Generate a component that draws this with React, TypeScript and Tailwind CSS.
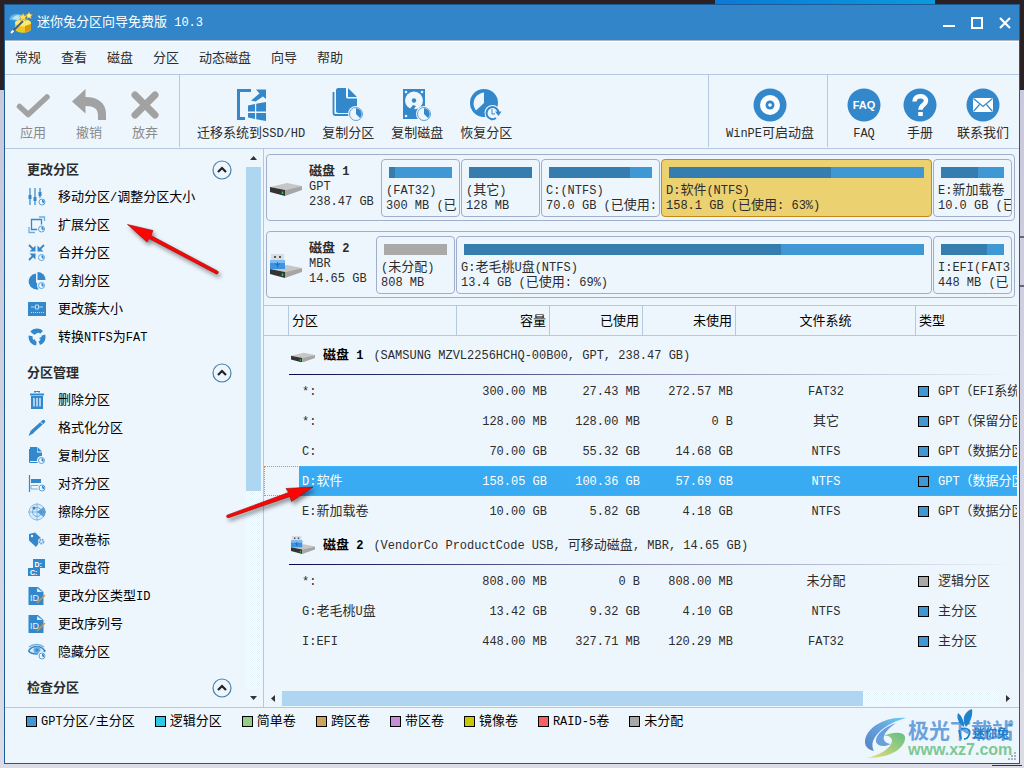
import React from "react";

type IconProps = { className?: string };

const BLUE = "#3387cb";
const PALE = "#eef6fd";

/** Latin runs use the parent's size, Chinese runs are one step larger. */
function Txt({ children }: { children: string }) {
  return (
    <>
      {children.split(/([^\x00-\xff]+)/).map((run, i) =>
        i % 2 ? (
          <span key={i} className="text-[13px]">
            {run}
          </span>
        ) : (
          run
        ),
      )}
    </>
  );
}

function PieBadge({ cx, cy, r }: { cx: number; cy: number; r: number }) {
  return (
    <g>
      <circle cx={cx} cy={cy} r={r + 1} fill={PALE} />
      <circle cx={cx} cy={cy} r={r - 0.5} fill={PALE} stroke="#5da3da" strokeWidth="1" />
      <path
        d={`M${cx} ${cy}V${cy - r + 1.3}A${r - 1.3} ${r - 1.3} 0 0 1 ${cx + (r - 1.3) * 0.7} ${cy + (r - 1.3) * 0.7}Z`}
        fill={BLUE}
      />
    </g>
  );
}

/* ---------- title bar ---------- */

function AppLogo() {
  return (
    <svg viewBox="0 0 24 24" className="size-6">
      <ellipse cx="8" cy="8" rx="7.500" ry="5" fill="#5fb6ea" />
      <path d="M1 9v5c2 4 7 5 10 4V10z" fill="#2c8fd0" />
      <path d="M3 8c2-4 8-5 11-3l-5 4z" fill="#b9e4fa" />
      <path d="M6 12c0-5 16-5 16 0v6c-1 5-15 5-16 0z" fill="#f0c71c" />
      <ellipse cx="14" cy="12" rx="8" ry="3.500" fill="#ffe873" />
      <path d="M16 15l6-2v5c-1 2-4 3-6 3z" fill="#d79a0c" />
      <path d="M2 22L14 10" stroke="#47607a" strokeWidth="2" />
      <path d="M2 22l2.500-2.500" stroke="#fff" strokeWidth="2" />
      <path
        d="M14 2l1.300 2.600 3 .200-2.200 2 .700 3L14 8.300l-2.600 1.500.600-3-2.100-2 3-.200z"
        fill="#ffe45a"
        stroke="#b98912"
        strokeWidth=".5"
      />
      <path
        d="M20 1l1.200 2.200 2.500.300-1.800 1.700.400 2.500-2.300-1.200-2.200 1.200.400-2.500-1.700-1.700 2.400-.300z"
        fill="#fff08a"
        stroke="#b98912"
        strokeWidth=".4"
      />
    </svg>
  );
}

/* ---------- toolbar icons ---------- */

const tool = "h-9 w-9";

function ApplyIcon() {
  return (
    <svg viewBox="0 0 36 36" className={tool}>
      <path d="M4.500 19.500l8.700 8L32 10" fill="none" stroke="#a2a2a2" strokeWidth="5.500" strokeLinecap="round" strokeLinejoin="round" />
    </svg>
  );
}
function UndoIcon() {
  return (
    <svg viewBox="0 0 36 36" className={tool}>
      <path d="M1 14.500L14.500 2v8C27 10 35 16 35 27v6h-8v-5c0-6-4-9-12.500-9v7.500z" fill="#a2a2a2" />
    </svg>
  );
}
function DiscardIcon() {
  return (
    <svg viewBox="0 0 36 36" className={tool}>
      <path d="M8 8l20 20M28 8L8 28" stroke="#a2a2a2" strokeWidth="7" strokeLinecap="round" />
    </svg>
  );
}
function MigrateIcon() {
  return (
    <svg viewBox="0 0 36 36" className={tool}>
      <path d="M18 3.500H5.500v28H12" fill="none" stroke={BLUE} strokeWidth="3" />
      <path d="M23 2.500h10V12l-3-2.500-7.500 5-4.500-1 8.500-7z" fill={BLUE} />
      <path d="M15 18.500l7-1.500v7.500h-7zM23.200 16.700L33 15v9.500h-9.800zM15 26h7v6l-7-1.400zM23.200 26H33v8l-9.800-1.700z" fill={BLUE} />
    </svg>
  );
}
function CopyPartitionIcon() {
  return (
    <svg viewBox="0 0 36 36" className={tool}>
      <path d="M3.500 5v21c0 1.500.500 2 2 2h16" fill="none" stroke={BLUE} strokeWidth="1.800" />
      <path d="M6 3c0-1 1-2 2-2h8v8.500c0 1.500.500 2 2 2h9V24c0 1-1 2-2 2H8c-1 0-2-1-2-2z" fill={BLUE} />
      <path d="M18 1l9 9h-9z" fill={BLUE} />
      <PieBadge cx={26} cy={27} r={7} />
    </svg>
  );
}
function CopyDiskIcon() {
  return (
    <svg viewBox="0 0 36 36" className={tool}>
      <rect x="4" y="2" width="22" height="30" fill={BLUE} />
      <circle cx="15" cy="13.500" r="9" fill={PALE} />
      <circle cx="15" cy="13.500" r="2.200" fill={BLUE} />
      <path d="M10 23l4-5 3 1-2 3 2 1-3 2z" fill={BLUE} />
      <g fill={PALE}>
        <circle cx="7" cy="5" r="1.300" />
        <circle cx="23" cy="5" r="1.300" />
        <circle cx="7" cy="29" r="1.300" />
      </g>
      <PieBadge cx={25} cy={27} r={7} />
    </svg>
  );
}
function RecoverIcon() {
  return (
    <svg viewBox="0 0 36 36" className={tool}>
      <circle cx="16" cy="16" r="14" fill={BLUE} />
      <path d="M16 5.500V16l-8 7.500C2.500 16 7 6.500 16 5.500z" fill={PALE} />
      <circle cx="24.500" cy="26" r="8" fill={PALE} />
      <path d="M28 31A6 6 0 1 1 30.500 26" fill="none" stroke={BLUE} strokeWidth="2" />
      <path d="M27 24.500h6.500l-3 4.500z" fill={BLUE} />
      <path d="M24 22v5h3" fill="none" stroke={BLUE} strokeWidth="1" />
    </svg>
  );
}
function DiscIcon() {
  return (
    <svg viewBox="0 0 36 36" className={tool}>
      <circle cx="18" cy="18" r="16.500" fill={BLUE} />
      <circle cx="18" cy="18" r="10" fill="#fff" />
      <circle cx="18" cy="18" r="4.500" fill={BLUE} />
      <circle cx="18" cy="18" r="1.800" fill="#fff" />
    </svg>
  );
}
function FaqIcon() {
  return (
    <svg viewBox="0 0 36 36" className={tool}>
      <circle cx="18" cy="18" r="16.500" fill={BLUE} />
      <text x="18" y="22" textAnchor="middle" fill="#fff" className="font-['Liberation_Sans',sans-serif] text-[11px] font-bold">
        FAQ
      </text>
    </svg>
  );
}
function HelpIcon() {
  return (
    <svg viewBox="0 0 36 36" className={tool}>
      <circle cx="18" cy="18" r="16.500" fill={BLUE} />
      <path d="M12.500 14.500c0-7 11.500-7 11.500-.8 0 4-5.500 4-5.500 9" fill="none" stroke="#fff" strokeWidth="4.500" />
      <rect x="16.200" y="25" width="4.600" height="4" fill="#fff" />
    </svg>
  );
}
function MailIcon() {
  return (
    <svg viewBox="0 0 36 36" className={tool}>
      <circle cx="18" cy="18" r="16.500" fill={BLUE} />
      <rect x="8" y="11" width="20" height="14" fill="#fff" />
      <path d="M8.500 11.500l9.500 8 9.500-8M8.500 24.500l6-7M27.500 24.500l-6-7" fill="none" stroke={BLUE} strokeWidth="1.200" />
    </svg>
  );
}

/* ---------- sidebar icons ---------- */

const side = "size-[18px] shrink-0";

function Icon18({ children }: { children: React.ReactNode }) {
  return (
    <svg viewBox="0 0 18 18" className={side}>
      {children}
    </svg>
  );
}
const MoveIcon = () => (
  <Icon18>
    <path d="M2 0v17M7 0v17M12 0v10" stroke={BLUE} strokeWidth="1.200" />
    <path d="M.5 7h3v4h-3zM5.500 9h3v4h-3zM10.500 4h3v4h-3z" fill={BLUE} />
    <PieBadge cx={14} cy={14} r={3.5} />
  </Icon18>
);
const ExtendIcon = () => (
  <Icon18>
    <path d="M3.500 3.500h10v10h-10z" fill="none" stroke={BLUE} strokeWidth="1.300" />
    <path d="M11 1h5.500v4M1 11v5.500h6" fill="none" stroke="#6faedf" strokeWidth="1.300" />
    <PieBadge cx={13.5} cy={13} r={3.5} />
  </Icon18>
);
const MergeIcon = () => (
  <Icon18>
    <path d="M1 1l5 5M16 1l-5 5M1 16l5-5" stroke={BLUE} strokeWidth="1.800" />
    <path d="M1.500 7.500h6v-6zM9.500 1.500v6h6zM1.500 9.500h6v6z" fill={BLUE} />
    <PieBadge cx={13.5} cy={13.5} r={3.5} />
  </Icon18>
);
const SplitIcon = () => (
  <Icon18>
    <path d="M8 1.500V10l4.500 6.500A8 8 0 1 1 8 1.500z" fill={BLUE} />
    <path d="M9.500 0A8 8 0 0 1 17.500 8h-8z" fill={BLUE} />
    <PieBadge cx={13.5} cy={13.5} r={3.5} />
  </Icon18>
);
const ClusterIcon = () => (
  <Icon18>
    <rect y="2" width="18" height="14" fill={BLUE} />
    <path d="M3 7h4M11 7h4M7.500 5h3v4h-3z" fill="none" stroke="#b7dbf5" />
    <path d="M3 12.500h13" stroke="#b7dbf5" strokeDasharray="1 1" />
  </Icon18>
);
const ConvertIcon = () => (
  <Icon18>
    <circle cx="9" cy="9" r="6.500" fill="none" stroke={BLUE} strokeWidth="4" strokeDasharray="10.600 3" strokeDashoffset="3" />
    <path d="M6 1l5 3-5 3zM17 8l-2 6-4-4zM8 17l-6-3 5-3z" fill={BLUE} />
  </Icon18>
);
const TrashIcon = () => (
  <Icon18>
    <path d="M7 1.500V0h4v1.500M2 3.500h14" fill="none" stroke={BLUE} strokeWidth="2" />
    <path d="M3 5h12v13H3z" fill={BLUE} />
    <path d="M6 7v8.500M9 7v8.500M12 7v8.500" stroke={PALE} strokeWidth="1.300" />
  </Icon18>
);
const FormatIcon = () => (
  <Icon18>
    <path d="M5 12L15.500 2.500" stroke={BLUE} strokeWidth="3.500" strokeLinecap="round" />
    <path d="M.5 17L3 11l3 3z" fill={BLUE} />
    <path d="M12.500 3l2.500 2.500" stroke={PALE} />
  </Icon18>
);
const CopyIcon = () => (
  <Icon18>
    <path d="M1.500 2v13.500H11" fill="none" stroke={BLUE} />
    <path d="M2 0h7v5.500h5V14H2zM9.500 0L14 4.500H9.500z" fill={BLUE} />
    <PieBadge cx={13.5} cy={13.5} r={3.5} />
  </Icon18>
);
const AlignIcon = () => (
  <Icon18>
    <path d="M1.500 0v17" stroke={BLUE} strokeWidth="1.200" />
    <path d="M3 4h10v4H3z" fill={BLUE} />
    <path d="M3 10.500h9v3.500H3z" fill="none" stroke="#6faedf" />
    <PieBadge cx={14} cy={13} r={3.5} />
  </Icon18>
);
const WipeIcon = () => (
  <Icon18>
    <circle cx="9" cy="9" r="8" fill="#d8eaf8" stroke="#8fbfe4" />
    <circle cx="9" cy="9" r="4.500" fill="none" stroke="#6faedf" />
    <path d="M9 0v18M0 9h18" stroke="#6faedf" strokeWidth=".8" />
    <path d="M9 9l6.500-5a8 8 0 0 1 0 10z" fill={BLUE} opacity=".7" />
    <circle cx="6" cy="5" r="1.600" fill={BLUE} />
  </Icon18>
);
const LabelIcon = () => (
  <Icon18>
    <path d="M1 3l6-1.500 7 6.500-6 8-7-6.500z" fill={BLUE} />
    <circle cx="4" cy="5" r="1.200" fill={PALE} />
    <circle cx="13.500" cy="10.500" r="3.500" fill={PALE} />
    <circle cx="13.500" cy="10.500" r="2" fill="none" stroke="#5da3da" strokeWidth="1.800" strokeDasharray="1.600 .6" />
  </Icon18>
);
const LetterIcon = () => (
  <Icon18>
    <path d="M5 0h12v9h-5v8H0V9h5z" fill={BLUE} />
    <text x="6.500" y="7.500" fill="#fff" className="font-['Liberation_Sans',sans-serif] text-[7px] font-bold">
      D:
    </text>
    <text x="2" y="15.500" fill="#fff" className="font-['Liberation_Sans',sans-serif] text-[7px] font-bold">
      C:
    </text>
  </Icon18>
);
const IdIcon = () => (
  <Icon18>
    <path d="M.5 0H10l5.500 5v13H.5z" fill={BLUE} />
    <path d="M9 1l5.500 4H9z" fill="#d8eaf8" />
    <text x="2" y="14" fill="#e6f2fb" className="font-['Liberation_Sans',sans-serif] text-[9px]">
      ID
    </text>
    <path d="M9 16l8-8" stroke="#d2963c" strokeWidth="1.500" />
  </Icon18>
);
const HideIcon = () => (
  <Icon18>
    <path d="M.5 8C4 2 13 2 17 8c-4 4-13 4-16.500 0z" fill="#d8eaf8" stroke={BLUE} strokeWidth="1.500" />
    <circle cx="9" cy="7" r="3.500" fill="#6faedf" />
    <circle cx="9" cy="7" r="1.500" fill={BLUE} />
    <path d="M1 4C5 .5 12 .5 16 4" fill="none" stroke="#6faedf" strokeWidth="1.500" />
    <PieBadge cx={14} cy={13} r={3.5} />
  </Icon18>
);

/* ---------- drives ---------- */

function DriveShape() {
  return (
    <>
      <path d="M0 5L17 1l15 3-17 4z" fill="#c6c6c6" />
      <path d="M0 5l15 3v6L0 10z" fill="#333" />
      <path d="M15 8l17-4v4L15 14z" fill="#a6a6a6" />
      <path d="M12.500 9.500v2.500" stroke="#28d23c" strokeWidth="1.500" />
    </>
  );
}
function HddIcon({ className }: IconProps) {
  return (
    <svg viewBox="0 0 32 14" className={className}>
      <DriveShape />
    </svg>
  );
}
function UsbIcon({ className }: IconProps) {
  return (
    <svg viewBox="0 0 32 24" className={className}>
      <g transform="translate(0 10)">
        <DriveShape />
      </g>
      <rect x="1" y="0" width="13" height="7" fill="#d9dde2" />
      <path d="M4 2h2v2H4zM9 2h2v2H9z" fill="#555" />
      <path d="M0 6h15v9H0z" fill="#3b93e4" />
      <path d="M0 6h15v3H0z" fill="#7dbcf2" />
      <path d="M7.500 8v5.500M5 9.500l2.500 2 2.500-2" fill="none" stroke="#1c66b8" strokeWidth=".9" />
    </svg>
  );
}

/* ---------- data ---------- */

const menus = ["常规", "查看", "磁盘", "分区", "动态磁盘", "向导", "帮助"];

const sections = [
  {
    title: "更改分区",
    items: [
      { label: "移动分区/调整分区大小", Icon: MoveIcon },
      { label: "扩展分区", Icon: ExtendIcon },
      { label: "合并分区", Icon: MergeIcon },
      { label: "分割分区", Icon: SplitIcon },
      { label: "更改簇大小", Icon: ClusterIcon },
      { label: "转换NTFS为FAT", Icon: ConvertIcon },
    ],
  },
  {
    title: "分区管理",
    items: [
      { label: "删除分区", Icon: TrashIcon },
      { label: "格式化分区", Icon: FormatIcon },
      { label: "复制分区", Icon: CopyIcon },
      { label: "对齐分区", Icon: AlignIcon },
      { label: "擦除分区", Icon: WipeIcon },
      { label: "更改卷标", Icon: LabelIcon },
      { label: "更改盘符", Icon: LetterIcon },
      { label: "更改分区类型ID", Icon: IdIcon },
      { label: "更改序列号", Icon: IdIcon },
      { label: "隐藏分区", Icon: HideIcon },
    ],
  },
  { title: "检查分区", items: [] },
];

type Block = { name: string; size: string; used: number; grow: string; free?: boolean; selected?: boolean };
const small = "w-[79px] shrink-0";
const disks = [
  {
    name: "磁盘 1",
    scheme: "GPT",
    size: "238.47 GB",
    usb: false,
    info: "w-[114px]",
    blocks: [
      { name: "(FAT32)", size: "300 MB (已", used: 9.5, grow: small },
      { name: "(其它)", size: "128 MB", used: 100, grow: small },
      { name: "C:(NTFS)", size: "70.0 GB (已使用:", used: 79, grow: "w-[119px] shrink-0" },
      { name: "D:软件(NTFS)", size: "158.1 GB (已使用: 63%)", used: 63.5, grow: "min-w-0 flex-1", selected: true },
      { name: "E:新加载卷", size: "10.0 GB (已", used: 58.5, grow: small },
    ] as Block[],
  },
  {
    name: "磁盘 2",
    scheme: "MBR",
    size: "14.65 GB",
    usb: true,
    info: "w-[109px]",
    blocks: [
      { name: "(未分配)", size: "808 MB", used: 0, grow: small, free: true },
      { name: "G:老毛桃U盘(NTFS)", size: "13.4 GB (已使用: 69%)", used: 69, grow: "min-w-0 flex-1" },
      { name: "I:EFI(FAT3", size: "448 MB (已", used: 73, grow: small },
    ] as Block[],
  },
];

const groups = [
  {
    name: "磁盘 1",
    detail: "(SAMSUNG MZVL2256HCHQ-00B00, GPT, 238.47 GB)",
    usb: false,
    rows: [
      ["*:", "300.00 MB", "27.43 MB", "272.57 MB", "FAT32", "GPT（EFI系统"],
      ["*:", "128.00 MB", "128.00 MB", "0 B", "其它", "GPT（保留分区"],
      ["C:", "70.00 GB", "55.32 GB", "14.68 GB", "NTFS", "GPT（数据分区"],
      ["D:软件", "158.05 GB", "100.36 GB", "57.69 GB", "NTFS", "GPT（数据分区"],
      ["E:新加载卷", "10.00 GB", "5.82 GB", "4.18 GB", "NTFS", "GPT（数据分区"],
    ],
  },
  {
    name: "磁盘 2",
    detail: "(VendorCo ProductCode USB, 可移动磁盘, MBR, 14.65 GB)",
    usb: true,
    rows: [
      ["*:", "808.00 MB", "0 B", "808.00 MB", "未分配", "逻辑分区"],
      ["G:老毛桃U盘", "13.42 GB", "9.32 GB", "4.10 GB", "NTFS", "主分区"],
      ["I:EFI", "448.00 MB", "327.71 MB", "120.29 MB", "FAT32", "主分区"],
    ],
  },
];

const legend = [
  ["GPT分区/主分区", "bg-[#3f98d3]"],
  ["逻辑分区", "bg-[#29cbe8]"],
  ["简单卷", "bg-[#97cd8b]"],
  ["跨区卷", "bg-[#cca45a]"],
  ["带区卷", "bg-[#c78ed8]"],
  ["镜像卷", "bg-[#c9c900]"],
  ["RAID-5卷", "bg-[#f96262]"],
  ["未分配", "bg-[#a8a8a8]"],
];

/* ---------- pieces ---------- */

function ToolButton({ label, width = "", muted, children }: { label: string; width?: string; muted?: boolean; children: React.ReactNode }) {
  return (
    <button type="button" className={`flex flex-col items-center whitespace-nowrap pt-3 ${width} ${muted ? "text-[#8a8a8a]" : ""}`}>
      {children}
      <span className="mt-[3px] leading-4">
        <Txt>{label}</Txt>
      </span>
    </button>
  );
}

function Section({ title, items }: { title: string; items: { label: string; Icon: () => React.JSX.Element }[] }) {
  return (
    <section>
      <div className="flex h-[26px] items-center justify-between pl-[22px] pr-[14px]">
        <h2 className="pt-[2px] text-[13px] font-bold">{title}</h2>
        <button type="button" aria-label={title} className="size-5">
          <svg viewBox="0 0 20 20" className="size-5">
            <circle cx="10" cy="10" r="9" fill="none" stroke="#4781ab" strokeWidth="1.200" />
            <path d="M6 12l4-4 4 4" fill="none" stroke="#222" strokeWidth="2.200" />
          </svg>
        </button>
      </div>
      <ul>
        {items.map(({ label, Icon }) => (
          <li key={label}>
            <button type="button" className="flex h-7 w-full items-center gap-3 whitespace-nowrap pl-[23px] text-black">
              <Icon />
              <span className="pt-[2px] leading-4">
                <Txt>{label}</Txt>
              </span>
            </button>
          </li>
        ))}
      </ul>
    </section>
  );
}

function DiskPanel({ disk }: { disk: (typeof disks)[number] }) {
  return (
    <div className="flex rounded-[4px] border border-[#a0aeca] pb-[3px] pr-[2px] pt-1 leading-[15px]">
      <div className={`flex shrink-0 items-center ${disk.info}`}>
        <div className="w-[42px] pl-[3px] pt-[2px]">{disk.usb ? <UsbIcon className="w-8" /> : <HddIcon className="w-8" />}</div>
        <div className="self-start whitespace-nowrap pt-[5px]">
          <div className="font-bold">
            <Txt>{disk.name}</Txt>
          </div>
          <div>{disk.scheme}</div>
          <div>{disk.size}</div>
        </div>
      </div>
      <div className="flex min-w-0 flex-1 gap-px">
        {disk.blocks.map((b) => (
          <button
            type="button"
            key={b.name}
            className={`flex h-[58px] flex-col overflow-hidden rounded-[4px] border pt-[7px] text-left ${b.grow} ${
              b.selected ? "border-[#c68a14] bg-[#ebd170]" : "border-[#a0aeca]"
            }`}
          >
            <span className={`mx-[7px] block h-[11px] self-stretch ${b.free ? "bg-[#a9a9a9]" : "bg-[#3f98d3]"}`}>
              <span className="block h-full bg-[#347dae]" style={{ width: `${b.used}%` }} />
            </span>
            <span className="ml-1 mt-[5px] flex flex-col self-stretch overflow-hidden whitespace-nowrap">
              <span className="h-[15px] leading-4">
                <Txt>{b.name}</Txt>
              </span>
              <span className="h-4 leading-4">
                <Txt>{b.size}</Txt>
              </span>
            </span>
          </button>
        ))}
      </div>
    </div>
  );
}

const hatch = "bg-[repeating-conic-gradient(#e3f2fb_0_25%,#ffffff_0_50%)] bg-[length:2px_2px]";

function Watermark() {
  return (
    <div className="pointer-events-none absolute bottom-1 right-[6px] flex items-center gap-[2px]">
      <svg viewBox="0 0 42 42" className="size-[42px] opacity-90">
        <defs>
          <linearGradient id="swirlTop" x1="0" y1="1" x2="1" y2="0">
            <stop offset="0" stopColor="#4377c0" />
            <stop offset=".6" stopColor="#5b9ddc" />
            <stop offset="1" stopColor="#58d0f4" />
          </linearGradient>
          <linearGradient id="swirlLow" x1="0" y1="1" x2="1" y2="0">
            <stop offset="0" stopColor="#e8dc6a" />
            <stop offset="1" stopColor="#54b878" />
          </linearGradient>
        </defs>
        <path d="M42 1C20-1 1 12 1 25c0 5 4 8 9 9C4 24 16 8 42 1z" fill="url(#swirlTop)" />
        <path d="M32 6C20 10 11 18 12 25c2 5 9 5 15 2-9-1-12-9 5-21z" fill="#5a97da" />
        <path d="M19 19c8-4 21-5 22 1 1 9-11 21-38 21 12-3 24-9 25-17 0-4-4-6-9-5z" fill="url(#swirlLow)" />
      </svg>
      <div className="font-['Noto_Sans_CJK_SC',sans-serif] leading-none">
        <div className="text-[21px] font-bold leading-[23px] text-[#6ba2dc]">极光下载站</div>
        <div className="font-['Liberation_Sans',sans-serif] text-[16px] font-bold leading-[18px] text-[#7cc894]">www.xz7.com</div>
      </div>
      <svg viewBox="0 0 20 32" className="absolute right-9 top-[-8px] h-8 w-5">
        <path d="M9 18C4 10 8 2 15 0c1 6-1 13-6 18zM7 18C2 15-1 9 1 4c4 3 6 8 6 14z" fill="#1f82cc" />
        <path d="M4 20c7-2 10 2 8 6-1 3-3 4-5 4M2 21l2 9" fill="none" stroke="#1f82cc" strokeWidth="1.800" />
      </svg>
      <span className="absolute right-1 top-[9px] whitespace-nowrap text-[12px] font-bold text-[#1f7cc8]">迷你兔</span>
      <span className="absolute right-0 top-[1px] text-[8px] font-bold text-[#1f7cc8]">®</span>
    </div>
  );
}

function Pointers() {
  return (
    <svg className="pointer-events-none absolute left-0 top-0 h-[540px] w-[330px] drop-shadow-[2px_3px_2px_rgba(0,0,0,0.45)]">
      <g fill="#fb0505" stroke="#8c1010" strokeWidth=".6">
        <path d="M127.500 224.500L153 230.500l-2 5 66.500 35.500a1.500 1.500 0 0 1-1.600 2.700L149 238.500l-2 3.500z" />
        <path d="M313 487l-27 1.500 2.500 4-61 22.500a1.400 1.400 0 0 0 1 2.700L290 496.500l1.500 5z" />
      </g>
    </svg>
  );
}

export default function App() {
  return (
    <div className="relative h-screen overflow-hidden p-1 font-['Liberation_Mono','Noto_Sans_CJK_SC',monospace] text-[12px] text-[#2c2c2c] [background:linear-gradient(to_right,#2b2024_715px,#0a7ad8_715px,#0a9ade_935px,#2b2024_935px)_top/100%_4px_no-repeat,linear-gradient(#2020e0,#2020e0)_right_2px_bottom_2px/30px_1px_no-repeat,linear-gradient(#66666e,#66666e)_right_0_top_236px/4px_2px_no-repeat,linear-gradient(#66666e,#66666e)_right_0_top_285px/4px_2px_no-repeat,linear-gradient(#2b2024_90px,#c9c8dc_90px,#dcdce8)]">
      <div className="flex h-full flex-col border border-[#1d5c94] bg-[#eef6fd]">
        <header className="flex h-9 shrink-0 items-center border-b border-[#a9b8c6] bg-[#3385ca] text-white">
          <div className="flex flex-1 items-center gap-1 pl-1">
            <AppLogo />
            <h1 className="leading-4">
              <Txt>迷你兔分区向导免费版 10.3</Txt>
            </h1>
          </div>
          <div className="flex items-center gap-4 pr-2">
            <button type="button" aria-label="最小化">
              <svg viewBox="0 0 12 12" className="size-3">
                <path d="M0 9h12" stroke="#fff" strokeWidth="2" />
              </svg>
            </button>
            <button type="button" aria-label="最大化">
              <svg viewBox="0 0 12 12" className="size-3">
                <path d="M1 1h10v10H1z" fill="none" stroke="#fff" strokeWidth="2" />
              </svg>
            </button>
            <button type="button" aria-label="关闭">
              <svg viewBox="0 0 12 12" className="size-3">
                <path d="M1 1l10 10M11 1L1 11" stroke="#fff" strokeWidth="2.200" />
              </svg>
            </button>
          </div>
        </header>

        <nav className="flex h-[34px] shrink-0 items-center gap-5 border-b border-t border-b-[#b5c8e2] border-t-white pl-[10px] pt-[2px] text-[13px]">
          {menus.map((m) => (
            <button type="button" key={m} className="leading-4">
              {m}
            </button>
          ))}
        </nav>

        <div className="flex h-[74px] shrink-0 border-b border-[#b5c8e2]">
          <div className="mb-px flex w-[175px] shrink-0 items-start border-r border-[#b5c8e2]">
            <ToolButton label="应用" width="w-14" muted>
              <ApplyIcon />
            </ToolButton>
            <ToolButton label="撤销" width="w-14" muted>
              <UndoIcon />
            </ToolButton>
            <ToolButton label="放弃" width="w-14" muted>
              <DiscardIcon />
            </ToolButton>
          </div>
          <div className="flex flex-1 items-start gap-[17px] pl-[17px]">
            <ToolButton label="迁移系统到SSD/HD">
              <MigrateIcon />
            </ToolButton>
            <ToolButton label="复制分区">
              <CopyPartitionIcon />
            </ToolButton>
            <ToolButton label="复制磁盘">
              <CopyDiskIcon />
            </ToolButton>
            <ToolButton label="恢复分区">
              <RecoverIcon />
            </ToolButton>
          </div>
          <div className="mb-px flex w-[120px] shrink-0 items-start justify-center border-x border-[#b5c8e2] pl-1">
            <ToolButton label="WinPE可启动盘">
              <DiscIcon />
            </ToolButton>
          </div>
          <div className="flex shrink-0 items-start pl-2 pr-px">
            <ToolButton label="FAQ" width="w-14">
              <FaqIcon />
            </ToolButton>
            <ToolButton label="手册" width="w-14">
              <HelpIcon />
            </ToolButton>
            <ToolButton label="联系我们" width="w-[70px]">
              <MailIcon />
            </ToolButton>
          </div>
        </div>

        <div className="flex min-h-0 flex-1">
          <aside className="flex w-[259px] shrink-0 border-r border-[#b5c8e2]">
            <div className="flex min-w-0 flex-1 flex-col gap-[9px] overflow-hidden pt-2">
              {sections.map((s) => (
                <Section key={s.title} title={s.title} items={s.items} />
              ))}
            </div>
            <div className="mr-[2px] flex w-[15px] flex-col">
              <button type="button" aria-label="向上滚动" className="flex h-[18px] items-center justify-center">
                <svg viewBox="0 0 7 4" className="h-1 w-[7px]">
                  <path d="M0 4l3.500-4L7 4z" fill="#333" />
                </svg>
              </button>
              <div className={`min-h-0 flex-1 ${hatch}`}>
                <div className="h-[62%] bg-[#aed6f1]" />
              </div>
              <button type="button" aria-label="向下滚动" className="flex h-[18px] items-center justify-center">
                <svg viewBox="0 0 7 4" className="h-1 w-[7px]">
                  <path d="M0 0l3.500 4L7 0z" fill="#333" />
                </svg>
              </button>
            </div>
          </aside>

          <main className="flex min-w-0 flex-1 flex-col pr-[2px]">
            <div className="flex flex-col gap-[10px] pb-[7px] pl-[2px] pr-[2px] pt-[5px]">
              {disks.map((d) => (
                <DiskPanel key={d.name} disk={d} />
              ))}
            </div>

            <div className="min-h-0 flex-1 overflow-hidden">
              <table className="w-[940px] table-fixed border-separate border-spacing-0 whitespace-nowrap leading-4">
                <colgroup>
                  <col className="w-[25px]" />
                  <col className="w-[168px]" />
                  <col className="w-[93px]" />
                  <col className="w-[93px]" />
                  <col className="w-[93px]" />
                  <col className="w-[180px]" />
                  <col />
                </colgroup>
                <thead className="text-[13px] text-black">
                  <tr className="h-[31px] *:border-y *:border-r *:border-[#b5c8e2] *:font-normal">
                    <th />
                    <th className="px-[3px] pb-0 pt-[2px] text-left">分区</th>
                    <th className="px-[3px] pb-0 pt-[2px] text-right">容量</th>
                    <th className="px-[3px] pb-0 pt-[2px] text-right">已使用</th>
                    <th className="px-[3px] pb-0 pt-[2px] text-right">未使用</th>
                    <th className="pb-0 pt-[2px] text-center">文件系统</th>
                    <th className="px-[3px] pb-0 pt-[2px] text-left">类型</th>
                  </tr>
                </thead>
                {groups.map((g) => (
                  <tbody key={g.name}>
                    <tr className="h-10">
                      <td />
                      <td colSpan={6} className="p-0">
                        <div className="flex h-[38px] items-center pl-[2px]">
                          {g.usb ? <UsbIcon className="mr-2 w-6" /> : <HddIcon className="mr-2 mt-1 w-6" />}
                          <strong className="mr-[10px] pt-[2px] text-black">
                            <Txt>{g.name}</Txt>
                          </strong>
                          <span className="pt-[2px]">
                            <Txt>{g.detail}</Txt>
                          </span>
                        </div>
                        <div className="mb-px h-px w-[728px] bg-linear-to-r from-[#0a0a50] via-[#8888b0] to-transparent" />
                      </td>
                    </tr>
                    {g.rows.map(([name, total, used, free, fs, type], i) => {
                      const selected = name === "D:软件";
                      const fill = selected ? "bg-[#38abf2] text-white" : "";
                      return (
                        <tr
                          key={i}
                          className={`h-[30px] ${selected ? "outline-1 -outline-offset-1 outline-dotted outline-[#ee8a2c]" : ""}`}
                        >
                          <td />
                          <td className="py-0 pl-[10px] pr-0">
                            <div className={`flex h-[30px] items-center pl-[3px] ${fill}`}>
                              <span className="pt-[2px]">
                                <Txt>{name}</Txt>
                              </span>
                            </div>
                          </td>
                          <td className={`pb-0 pr-[3px] pt-[2px] text-right ${fill}`}>{total}</td>
                          <td className={`pb-0 pr-[3px] pt-[2px] text-right ${fill}`}>{used}</td>
                          <td className={`pb-0 pr-[3px] pt-[2px] text-right ${fill}`}>{free}</td>
                          <td className={`px-0 pb-0 pt-[2px] text-center ${fill}`}>
                            <Txt>{fs}</Txt>
                          </td>
                          <td className={`py-0 pl-[2px] pr-0 ${fill}`}>
                            <div className="flex items-center gap-[9px]">
                              <span className={`size-[11px] border border-black ${fs === "未分配" ? "bg-[#a8a8a8]" : "bg-[#3f98d3]"}`} />
                              <span className="pt-[2px]">
                                <Txt>{type}</Txt>
                              </span>
                            </div>
                          </td>
                        </tr>
                      );
                    })}
                  </tbody>
                ))}
              </table>
            </div>

            <div className="flex h-4 shrink-0 pb-px">
              <button type="button" aria-label="向左滚动" className="flex w-[18px] items-center justify-center">
                <svg viewBox="0 0 4 7" className="h-[7px] w-1">
                  <path d="M4 0L0 3.500 4 7z" fill="#333" />
                </svg>
              </button>
              <div className={`flex-1 ${hatch}`}>
                <div className="h-full w-[81%] bg-[#aed6f1]" />
              </div>
              <button type="button" aria-label="向右滚动" className="flex w-[18px] items-center justify-center">
                <svg viewBox="0 0 4 7" className="h-[7px] w-1">
                  <path d="M0 0l4 3.500L0 7z" fill="#333" />
                </svg>
              </button>
            </div>
          </main>
        </div>

        <footer className="relative h-14 shrink-0 border-t border-[#b5c8e2] pl-[21px] pt-1 text-black">
          <ul className="flex gap-5">
            {legend.map(([label, color]) => (
              <li key={label} className="flex items-center gap-1 whitespace-nowrap leading-4">
                <span className={`size-[11px] border border-black ${color}`} />
                <span className="pt-[2px]">
                  <Txt>{label}</Txt>
                </span>
              </li>
            ))}
          </ul>
          <Watermark />
          <svg viewBox="0 0 9 9" className="absolute bottom-[2px] right-[2px] size-[9px]">
            <path d="M6 0h2v2H6zM3 3h2v2H3zM6 3h2v2H6zM0 6h2v2H0zM3 6h2v2H3zM6 6h2v2H6z" fill="#a9b3bd" />
          </svg>
        </footer>
      </div>
      <Pointers />
    </div>
  );
}
